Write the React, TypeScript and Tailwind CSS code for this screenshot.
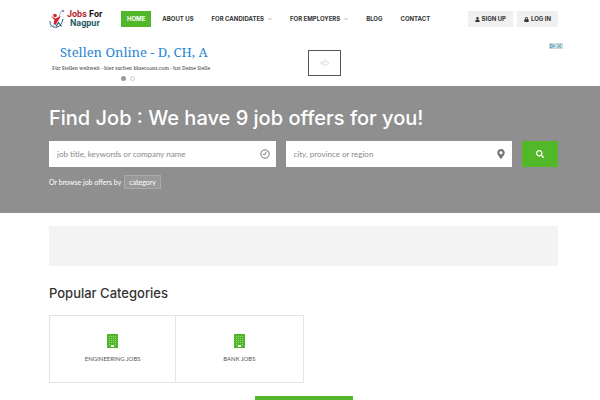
import type { ReactNode } from "react";
import { FaChevronDown, FaLock, FaMapMarkerAlt, FaSearch, FaUser } from "react-icons/fa";

const NAV_LINKS = [
  { label: "About Us", hasMenu: false },
  { label: "For Candidates", hasMenu: true },
  { label: "For Employers", hasMenu: true },
  { label: "Blog", hasMenu: false },
  { label: "Contact", hasMenu: false },
];

const CATEGORIES = ["Engineering Jobs", "Bank Jobs"];

function Logo() {
  return (
    <a href="#" aria-label="Jobs For Nagpur" className="flex w-[72px] items-center">
      <svg viewBox="0 0 18 20" className="h-5 w-[18px] shrink-0" fill="none">
        <path d="M1 12C1 16 3 18.300 6.500 18.300C10.500 18.300 13 15 14 10" stroke="#255d78" strokeWidth="1" />
        <path d="M1 17.500C6 17.500 10 11 11.500 3C12 2 13 1.500 14 1.500" stroke="#7895a5" strokeWidth=".7" />
        <path d="M2 7l4.500 2.500L12 7l-2.500 4-3 5-2-1.500 1-3.500z" fill="#d6222b" />
        <circle cx="6" cy="6.500" r="1.800" fill="#d6222b" />
        <path d="M7 17.500l2.500-4 3 4" stroke="#255d78" strokeWidth="1.200" />
        <circle cx="14" cy="2" r="1.300" fill="#8ba0aa" />
      </svg>
      <span className="flex flex-col font-['Roboto',sans-serif] text-[9px] leading-[9px] font-bold whitespace-nowrap normal-case">
        <span className="text-[#b51f2d]">
          Jobs <span className="text-[#171717]">For</span>
        </span>
        <span className="pl-[3px] text-[#265b68]">Nagpur</span>
      </span>
    </a>
  );
}

function Header() {
  return (
    <header className="flex h-[38px] items-center justify-between pr-[42px] pl-[49px] font-['Inter',sans-serif] text-[6px] leading-4 font-bold whitespace-nowrap text-[#333] uppercase">
      <div className="flex items-center">
        <Logo />
        <nav className="flex items-center">
          <a href="#" className="mr-[2px] bg-[#53b829] px-[6px] text-white">
            Home
          </a>
          {NAV_LINKS.map((link) => (
            <a key={link.label} href="#" className="flex items-center gap-1 px-[9px]">
              {link.label}
              {link.hasMenu && <FaChevronDown className="h-1 w-1 text-gray-400" />}
            </a>
          ))}
        </nav>
      </div>
      <div className="flex gap-1">
        <a href="#" className="flex items-center gap-[2px] bg-[#f0f0f0] px-[7px]">
          <FaUser className="h-[5px] w-[5px]" />
          Sign Up
        </a>
        <a href="#" className="flex items-center gap-[2px] bg-[#f0f0f0] px-[7px]">
          <FaLock className="h-[5px] w-[5px]" />
          Log In
        </a>
      </div>
    </header>
  );
}

function AdBanner() {
  return (
    <section className="relative flex h-12 pl-[52px]">
      <div className="flex w-[158px] flex-col font-['Noto_Serif','DejaVu_Serif',serif] whitespace-nowrap">
        <a href="#" className="pt-1 pl-2 text-[13px] leading-5 text-[#2684d0]">
          Stellen Online - D, CH, A
        </a>
        <p className="text-[5px] leading-3 text-[#333]">
          Für Stellen weltweit - hier suchen bluecoons.com - hat Deine Stelle
        </p>
        <div className="flex justify-center gap-1 pt-[2px] pr-[6px]">
          <span className="h-[5px] w-[5px] rounded-full bg-[#999]" />
          <span className="h-[5px] w-[5px] rounded-full border border-[#ccc]" />
        </div>
      </div>
      <button
        type="button"
        aria-label="Open ad"
        className="mt-3 ml-[98px] flex h-[26px] w-[33px] items-center justify-center border border-[#555]"
      >
        <svg viewBox="0 0 10 8" className="h-2 w-[10px]" fill="none" stroke="#ddd">
          <path d="M1 3h4V1l4 3-4 3V5H1z" />
        </svg>
      </button>
      <svg viewBox="0 0 14 6" className="absolute top-[5px] right-[37px] h-[6px] w-[14px]" fill="none">
        <path d="M0 0h14v6H0z" fill="#cfd8db" />
        <path d="M1.500 1l4 2-4 2zM9 1l3 4M12 1L9 5" stroke="#35a9c6" strokeWidth=".8" />
      </svg>
    </section>
  );
}

function ClockIcon() {
  return (
    <svg viewBox="0 0 10 10" className="h-[10px] w-[10px] text-[#777]" fill="none" stroke="currentColor">
      <circle cx="5" cy="5" r="4.200" />
      <path d="M6 2.500L5.200 5.500H3" strokeWidth=".9" />
    </svg>
  );
}

function SearchField({ label, icon }: { label: string; icon: ReactNode }) {
  return (
    <label className="flex h-[26px] flex-1 items-center bg-white pr-[6px] pl-2">
      <input
        type="text"
        aria-label={label}
        placeholder={label}
        className="min-w-0 flex-1 text-[8px] leading-3 text-[#555] outline-none placeholder:text-[#888]"
      />
      {icon}
    </label>
  );
}

function Hero() {
  return (
    <section className="h-[127px] bg-[#8f8f8f] pt-[18px] pr-[42px] pl-[49px] text-white">
      <h1 className="font-['Inter',sans-serif] text-[20px] leading-7 font-medium whitespace-nowrap">
        Find Job : We have 9 job offers for you!
      </h1>
      <form className="mt-[9px] flex gap-[10px]" onSubmit={(e) => e.preventDefault()}>
        <SearchField label="job title, keywords or company name" icon={<ClockIcon />} />
        <SearchField
          label="city, province or region"
          icon={<FaMapMarkerAlt className="h-[10px] w-[10px] text-[#777]" />}
        />
        <button type="submit" aria-label="Search" className="flex w-9 items-center justify-center bg-[#53b829]">
          <FaSearch className="h-2 w-2" />
        </button>
      </form>
      <div className="mt-2 flex items-center gap-[3px] text-[7px] leading-3">
        Or browse job offers by
        <a href="#" className="border border-[#aaa] bg-[#999] px-1">
          category
        </a>
      </div>
    </section>
  );
}

function BuildingIcon() {
  return (
    <svg viewBox="0 0 11 14" className="h-[14px] w-[11px]">
      <path d="M0 0h11v14H0z" fill="#4fb52b" />
      <path
        d="M2 2h1v1H2zM4 2h1v1H4zM6 2h1v1H6zM8 2h1v1H8zM2 4h1v1H2zM4 4h1v1H4zM6 4h1v1H6zM8 4h1v1H8zM2 6h1v1H2zM4 6h1v1H4zM6 6h1v1H6zM8 6h1v1H8zM2 8h1v1H2zM4 8h1v1H4zM6 8h1v1H6zM8 8h1v1H8zM2 10h1v1H2zM8 10h1v1H8z"
        fill="#8fdb70"
      />
      <path d="M4 11h3v2H4z" fill="#fff" />
    </svg>
  );
}

function PopularCategories() {
  return (
    <section className="pt-[18px]">
      <h2 className="font-['Inter',sans-serif] text-[13px] leading-[18px] font-medium text-[#333]">
        Popular Categories
      </h2>
      <div className="mt-[13px] grid grid-cols-4">
        {CATEGORIES.map((name) => (
          <a
            key={name}
            href="#"
            className="flex h-[68px] flex-col items-center border border-[#e4e4e4] pt-[18px] text-[6px] leading-[14px] text-[#555] uppercase not-first:border-l-0"
          >
            <BuildingIcon />
            <span className="mt-1">{name}</span>
          </a>
        ))}
      </div>
      <button
        type="button"
        aria-label="Browse all categories"
        className="mx-auto mt-[13px] block h-6 w-[98px] bg-[#53b829]"
      />
    </section>
  );
}

export default function App() {
  return (
    <div className="max-h-screen overflow-hidden bg-white font-['Lato',sans-serif]">
      <Header />
      <AdBanner />
      <Hero />
      <main className="pt-[13px] pr-[42px] pl-[49px]">
        <div className="h-10 bg-[#f3f3f3]" />
        <PopularCategories />
      </main>
    </div>
  );
}
